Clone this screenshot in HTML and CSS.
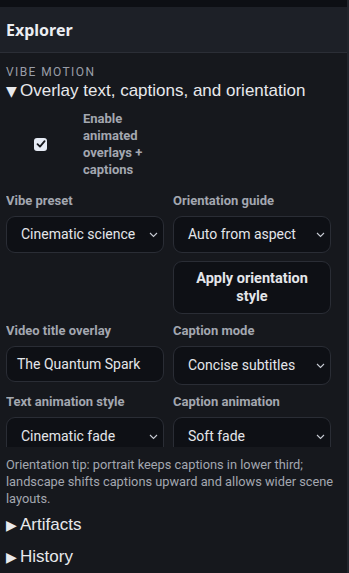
FILE: index.html
```html
<!DOCTYPE html>
<html lang="en">
<head>
  <title>Explorer</title>
  <link rel="stylesheet" href="styles.css">
</head>
<body>
  <div class="topbar"></div>
  <header class="panel-head">
    <h1>Explorer</h1>
  </header>

  <main class="panel-body">
    <div class="eyebrow">VIBE MOTION</div>

    <details open>
      <summary>Overlay text, captions, and orientation</summary>

      <label class="check-row">
        <span class="check-col">
          <span class="checkbox">
            <svg width="10" height="10" viewBox="0 0 10 10"><path d="M1.5 5.2 L4 7.6 L8.6 2.2" fill="none" stroke="#15171c" stroke-width="1.8" stroke-linecap="round" stroke-linejoin="round"/></svg>
          </span>
        </span>
        <span class="check-label">Enable animated overlays + captions</span>
      </label>

      <div class="fields">
        <div class="field">
          <div class="field-label">Vibe preset</div>
          <div class="select">
            <span>Cinematic science</span>
            <svg class="chev" width="9" height="6" viewBox="0 0 9 6"><path d="M1 1 L4.5 4.5 L8 1" fill="none" stroke="#c8ccd4" stroke-width="1.1"/></svg>
          </div>
        </div>
        <div class="field">
          <div class="field-label">Orientation guide</div>
          <div class="select">
            <span>Auto from aspect</span>
            <svg class="chev" width="9" height="6" viewBox="0 0 9 6"><path d="M1 1 L4.5 4.5 L8 1" fill="none" stroke="#c8ccd4" stroke-width="1.1"/></svg>
          </div>
          <button type="button" class="btn">Apply orientation style</button>
        </div>

        <div class="field">
          <div class="field-label">Video title overlay</div>
          <div class="text-input">The Quantum Spark</div>
        </div>
        <div class="field">
          <div class="field-label">Caption mode</div>
          <div class="select tall">
            <span>Concise subtitles</span>
            <svg class="chev" width="9" height="6" viewBox="0 0 9 6"><path d="M1 1 L4.5 4.5 L8 1" fill="none" stroke="#c8ccd4" stroke-width="1.1"/></svg>
          </div>
        </div>

        <div class="field">
          <div class="field-label">Text animation style</div>
          <div class="select tall">
            <span>Cinematic fade</span>
            <svg class="chev" width="9" height="6" viewBox="0 0 9 6"><path d="M1 1 L4.5 4.5 L8 1" fill="none" stroke="#c8ccd4" stroke-width="1.1"/></svg>
          </div>
        </div>
        <div class="field">
          <div class="field-label">Caption animation</div>
          <div class="select tall">
            <span>Soft fade</span>
            <svg class="chev" width="9" height="6" viewBox="0 0 9 6"><path d="M1 1 L4.5 4.5 L8 1" fill="none" stroke="#c8ccd4" stroke-width="1.1"/></svg>
          </div>
        </div>
      </div>

      <p class="tip">Orientation tip: portrait keeps captions in lower third; landscape shifts captions upward and allows wider scene layouts.</p>
    </details>

    <details class="closed">
      <summary>Artifacts</summary>
    </details>
    <details class="closed">
      <summary>History</summary>
    </details>
  </main>
</body>
</html>
```

FILE: styles.css
```css
body {
  margin: 0;
  background-color: #16181d;
  color: #e4e6ea;
  font-family: Roboto, "Noto Sans", sans-serif;
  height: 573px;
  overflow: hidden;
  border-right: 2px solid #22252c;
}

.topbar {
  height: 7px;
  background-color: #0d0f14;
}

.panel-head {
  background-color: #1d2027;
  border-bottom: 1px solid #2b2e36;
  height: 45px;
  display: flex;
  align-items: center;
  padding: 0 6px;
}

.panel-head h1 {
  margin: 0;
  font-family: "Noto Sans", sans-serif;
  font-size: 16px;
  font-weight: 700;
  color: #eceef2;
}

.panel-body {
  padding: 11px 6px 0;
}

.eyebrow {
  font-size: 12px;
  letter-spacing: 1.4px;
  color: #9a9ea8;
  line-height: 16px;
}

summary {
  list-style: none;
  font-family: "Liberation Sans", Arial, sans-serif;
  font-size: 17px;
  line-height: 22px;
  color: #e8e9ec;
  cursor: pointer;
}

summary::-webkit-details-marker {
  display: none;
}

summary::before {
  content: "\25BC";
  display: inline-block;
  width: 14px;
  font-family: "DejaVu Sans", sans-serif;
  font-size: 14px;
}

details.closed summary::before {
  content: "\25B6";
}

.check-row {
  display: flex;
  align-items: center;
  margin-top: 8px;
}

.check-col {
  width: 77px;
  padding-left: 28px;
  box-sizing: border-box;
}

.checkbox {
  width: 13px;
  height: 13px;
  border-radius: 3px;
  background-color: #e6ebf5;
  display: flex;
  align-items: center;
  justify-content: center;
}

.check-label {
  width: 72px;
  font-size: 13px;
  font-weight: 700;
  line-height: 17px;
  color: #a3a7b0;
}

.fields {
  display: grid;
  grid-template-columns: 1fr 1fr;
  column-gap: 9px;
  row-gap: 9px;
  margin-top: 15px;
  margin-right: 10px;
  height: 254px;
  overflow: hidden;
}

.field-label {
  font-size: 13px;
  font-weight: 700;
  line-height: 16px;
  color: #a3a7b0;
  margin-bottom: 7px;
}

.select,
.text-input,
.btn {
  background-color: #0e1015;
  border: 1px solid #2a2d35;
  border-radius: 9px;
  color: #e4e6ea;
  font-family: inherit;
  font-size: 14px;
}

.select {
  display: flex;
  align-items: center;
  justify-content: space-between;
  padding: 8px 5px 8px 14px;
  line-height: 19px;
}

.select.tall {
  padding-top: 9px;
  padding-bottom: 9px;
}

.chev {
  flex: none;
}

.text-input {
  padding: 7px 10px;
  line-height: 20px;
}

.btn {
  display: block;
  width: 100%;
  margin-top: 8px;
  padding: 8px 10px 7px;
  font-weight: 700;
  font-size: 14.5px;
  line-height: 18px;
  text-align: center;
}

.tip {
  margin: 9px 0 7px;
  font-size: 12.8px;
  line-height: 17px;
  color: #a3a7b0;
}

details.closed {
  margin-bottom: 10px;
}
```
